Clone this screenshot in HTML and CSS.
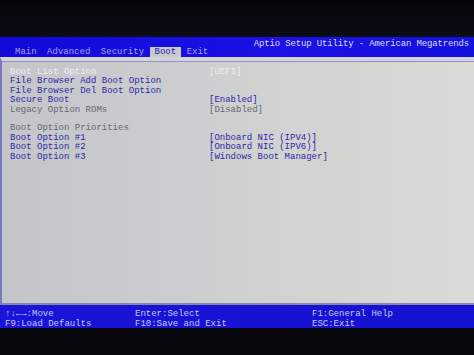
FILE: index.html
```html
<!DOCTYPE html>
<html lang="en">
<head>
  <meta charset="UTF-8">
  <title>Aptio Setup Utility</title>
  <link rel="stylesheet" href="styles.css">
</head>
<body>

<div class="bezel"></div>

<!-- Barra de titulo e abas -->
<header class="topo">
  <div class="titulo">Aptio Setup Utility - American Megatrends</div>
  <nav class="abas">
    <span class="aba">Main</span>
    <span class="aba">Advanced</span>
    <span class="aba">Security</span>
    <span class="aba ativa">Boot</span>
    <span class="aba">Exit</span>
  </nav>
</header>

<main class="painel">
  <div class="linha"><span class="rotulo claro">Boot List Option</span><span class="valor claro">[UEFI]</span></div>
  <div class="linha"><span class="rotulo">File Browser Add Boot Option</span></div>
  <div class="linha"><span class="rotulo">File Browser Del Boot Option</span></div>
  <div class="linha"><span class="rotulo">Secure Boot</span><span class="valor">[Enabled]</span></div>
  <div class="linha"><span class="rotulo cinza">Legacy Option ROMs</span><span class="valor cinza">[Disabled]</span></div>
  <div class="linha vazia"></div>
  <div class="linha"><span class="rotulo cinza">Boot Option Priorities</span></div>
  <div class="linha"><span class="rotulo">Boot Option #1</span><span class="valor">[Onboard NIC (IPV4)]</span></div>
  <div class="linha"><span class="rotulo">Boot Option #2</span><span class="valor">[Onboard NIC (IPV6)]</span></div>
  <div class="linha"><span class="rotulo">Boot Option #3</span><span class="valor">[Windows Boot Manager]</span></div>
</main>

<footer class="rodape">
  <div class="col">
    <p>&uarr;&darr;&larr;&rarr;:Move</p>
    <p>F9:Load Defaults</p>
  </div>
  <div class="col">
    <p>Enter:Select</p>
    <p>F10:Save and Exit</p>
  </div>
  <div class="col">
    <p>F1:General Help</p>
    <p>ESC:Exit</p>
  </div>
</footer>

</body>
</html>
```

FILE: styles.css
```css
* {
  margin: 0;
  padding: 0;
  box-sizing: border-box;
}
body {
  background-color: #07070d;
  font-family: "Liberation Mono", "DejaVu Sans Mono", monospace;
  font-size: 9px;
  width: 474px;
  height: 355px;
  overflow: hidden;
}
.bezel {
  height: 37px;
  background: linear-gradient(to bottom, #050508, #0c0c18);
}
.topo {
  height: 20px;
  background: linear-gradient(to right, #1208d8, #1a12e6 60%, #1410dc);
  color: #dcdcff;
}
.titulo {
  text-align: right;
  padding: 2px 5px 0 0;
  height: 10px;
  line-height: 10px;
  letter-spacing: -0.15px;
}
.abas {
  display: flex;
  padding-left: 15px;
  height: 10px;
  align-items: flex-end;
}
.aba {
  color: #a4a4ee;
  line-height: 9px;
  margin-right: 10.5px;
}
.ativa {
  background-color: #c9c9cc;
  color: #2020b0;
  height: 10px;
  line-height: 10px;
  padding: 0 5px;
  margin-left: -5px;
  margin-right: 5.5px;
}
.painel {
  height: 248px;
  background: linear-gradient(to right, #c4c5c9, #cfd0d0 50%, #dadad6);
  border-top: 4px solid #d4d4d8;
  border-bottom: 2px solid #8686b0;
  border-left: 2px solid #7a7ac0;
  padding: 7px 0 0 8px;
  box-shadow: inset 0 1px 0 #9090c8;
}
.linha {
  display: grid;
  grid-template-columns: 199px auto;
  height: 9.4px;
  line-height: 9.4px;
  white-space: pre;
}
.rotulo, .valor {
  color: #2a2aa8;
}
.claro {
  color: #eeeef4;
}
.cinza {
  color: #68686e;
}
.rodape {
  height: 23px;
  background: linear-gradient(to right, #1a14d8, #1410d4);
  color: #c8c8f8;
  display: grid;
  grid-template-columns: 130px 177px auto;
  padding: 5px 0 0 5px;
  line-height: 9.8px;
}
.rodape p {
  white-space: pre;
}
```
